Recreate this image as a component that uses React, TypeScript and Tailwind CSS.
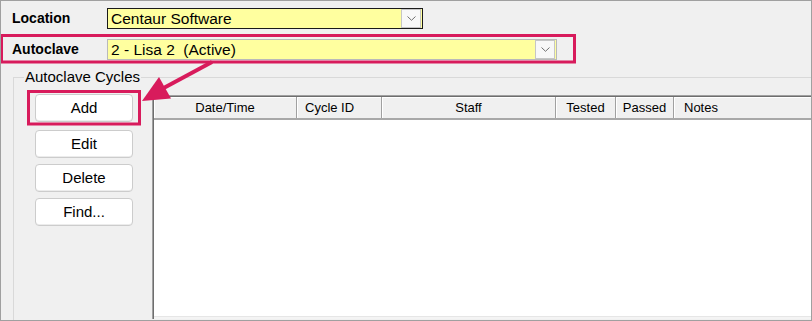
import type { ComponentProps } from "react";

const columns = [
  { label: "Date/Time", width: "w-[143px]", align: "justify-center" },
  { label: "Cycle ID", width: "w-[85px]", align: "justify-start pl-[8px]" },
  { label: "Staff", width: "w-[174px]", align: "justify-center" },
  { label: "Tested", width: "w-[60px]", align: "justify-center" },
  { label: "Passed", width: "w-[58px]", align: "justify-center" },
  { label: "Notes", width: "flex-1", align: "justify-start pl-[10px]" },
];

const App = () => {
  return (
    <div className="relative h-[321px] w-[812px] overflow-hidden border border-[#a0a0a0] bg-[#f0f0f0] font-['Liberation_Sans',Arial,sans-serif] text-black">
      <div className="flex flex-col pt-[7px] pl-[11px]">
        <Row>
          <Label>Location</Label>
          <Combo className="w-[316px] border-[#1a1a1a]">Centaur Software</Combo>
        </Row>

        <Row className="mt-[10px]">
          <Label>Autoclave</Label>
          <Combo className="w-[450px] border-[#b9b9b9]">2 - Lisa 2  (Active)</Combo>
        </Row>

        <GroupBox>
          <div className="flex flex-col gap-[6px]">
            <PushButton className="mb-[2px]">Add</PushButton>
            <PushButton>Edit</PushButton>
            <PushButton>Delete</PushButton>
            <PushButton>Find...</PushButton>
          </div>

          <CycleTable />
        </GroupBox>
      </div>

      <Annotations />
    </div>
  );
};

const Row = ({ className = "", ...props }: ComponentProps<"div">) => {
  return <div className={`flex h-[21px] items-center ${className}`} {...props} />;
};

const Label = (props: ComponentProps<"span">) => {
  return <span className="w-[95px] text-[14px] font-bold" {...props} />;
};

const Combo = ({ className = "", children }: ComponentProps<"div">) => {
  return (
    <div
      className={`flex h-[21px] items-center border bg-[#ffff9f] ${className}`}
    >
      <span className="flex-1 pl-[3px] text-[15.5px] leading-none whitespace-pre">
        {children}
      </span>
      <span className="mr-[1px] flex h-[19px] w-[20px] items-center justify-center border border-[#c6c6c6] bg-[#f8f8f8]">
        <svg width="9" height="5" viewBox="0 0 9 5">
          <path d="M0.5 0.5 L4.5 4.3 L8.5 0.5" fill="none" stroke="#707070" strokeWidth="1" />
        </svg>
      </span>
    </div>
  );
};

const GroupBox = ({ children }: ComponentProps<"div">) => {
  return (
    <div className="relative mt-[17px] ml-[1px] flex h-[244px] w-[820px] items-start gap-[19px] border border-[#d9d9d9] pt-[16px] pl-[21px]">
      <span className="absolute -top-[10px] left-[10px] bg-[#f0f0f0] px-[1px] text-[15px] leading-[18px]">
        Autoclave Cycles
      </span>
      {children}
    </div>
  );
};

const PushButton = ({ className = "", ...props }: ComponentProps<"button">) => {
  return (
    <button
      className={`flex h-[28px] w-[98px] items-center justify-center rounded-[4px] border border-[#cccccc] bg-white text-[15px] shadow-[inset_0_-1px_0_#ececec] ${className}`}
      {...props}
    />
  );
};

const CycleTable = () => {
  return (
    <div className="mt-[1px] h-[224px] w-[680px] border-t border-l border-[#a0a0a0]">
      <div className="flex h-full flex-col border-t border-l border-[#6e6e6e] bg-white">
        <div className="flex h-[23px] border-b-2 border-[#a8a8a8] bg-[#f0f0f0] shadow-[inset_0_1px_0_#ffffff]">
          {columns.map((col) => (
            <div
              key={col.label}
              className={`flex items-center border-r border-[#a0a0a0] text-[13px] shadow-[inset_1px_0_0_#ffffff] ${col.width} ${col.align}`}
            >
              {col.label}
            </div>
          ))}
        </div>
        <div className="flex-1" />
        <div className="h-[3px] border-t border-[#e6e6e6] bg-[#f4f4f4]" />
      </div>
    </div>
  );
};

const Annotations = () => {
  return (
    <svg
      className="pointer-events-none absolute -top-[1px] -left-[1px]"
      width="812"
      height="321"
      viewBox="0 0 812 321"
    >
      <rect x="1.5" y="35.5" width="573" height="26.5" fill="none" stroke="#d81b5c" strokeWidth="3" />
      <rect x="28.5" y="91.5" width="111" height="32.5" fill="none" stroke="#d81b5c" strokeWidth="3" />
      <line x1="212" y1="62" x2="160" y2="90" stroke="#d81b5c" strokeWidth="4" />
      <polygon points="142,101 159,77 171,98.5" fill="#d81b5c" />
    </svg>
  );
};

export default App;
